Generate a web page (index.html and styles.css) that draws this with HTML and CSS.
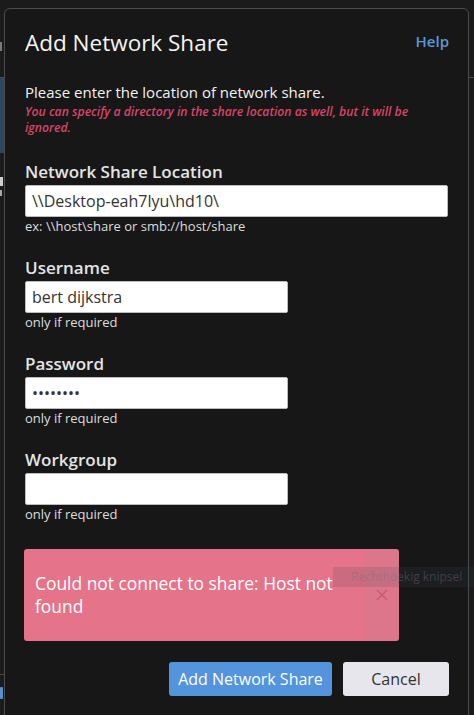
FILE: index.html
```html
<!DOCTYPE html>
<html lang="en">
<head>
<meta charset="utf-8">
<title>Add Network Share</title>
<link rel="stylesheet" href="styles.css">
</head>
<body>
<div class="screen">
  <div class="strip strip-left">
    <div class="s-top"><span class="frag"></span></div>
    <div class="s-line"></div>
    <div class="s-blue"></div>
    <div class="s-gap"></div>
    <div class="s-mark"></div>
    <div class="s-mark small"></div>
    <div class="s-fill"></div>
    <div class="s-line"></div>
    <div class="s-link"></div>
  </div>

  <div class="dialog">
    <header class="dlg-head">
      <h1 class="dlg-title">Add Network Share</h1>
      <a class="help">Help</a>
    </header>

    <div class="intro">
      <p class="intro-main">Please enter the location of network share.</p>
      <p class="intro-note">You can specify a directory in the share location as well, but it will be ignored.</p>
    </div>

    <div class="field first">
      <label class="field-label">Network Share Location</label>
      <input class="field-input wide" type="text" value="\\Desktop-eah7lyu\hd10\">
      <div class="field-hint">ex: \\host\share or smb://host/share</div>
    </div>

    <div class="field">
      <label class="field-label">Username</label>
      <input class="field-input" type="text" value="bert dijkstra">
      <div class="field-hint">only if required</div>
    </div>

    <div class="field">
      <label class="field-label">Password</label>
      <input class="field-input" type="password" value="12345678">
      <div class="field-hint">only if required</div>
    </div>

    <div class="field">
      <label class="field-label">Workgroup</label>
      <input class="field-input" type="text" value="">
      <div class="field-hint">only if required</div>
    </div>

    <div class="alert">
      <div class="alert-text">Could not connect to share: Host not found</div>
      <div class="alert-close">
        <svg width="12" height="12" viewBox="0 0 12 12"><path d="M1 1 L11 11 M11 1 L1 11" stroke="#c9566f" stroke-width="1.3" fill="none"/></svg>
      </div>
    </div>

    <div class="actions">
      <button class="btn btn-primary">Add Network Share</button>
      <button class="btn btn-default">Cancel</button>
    </div>
  </div>

  <div class="strip strip-right">
    <div class="s-top"></div>
    <div class="s-line"></div>
  </div>
</div>
<div class="tooltip">Rechthoekig knipsel</div>
</body>
</html>
```

FILE: styles.css
```css
* { box-sizing: border-box; }

html, body {
  margin: 0;
  padding: 0;
  height: 715px;
  overflow: hidden;
  background: #1b1b1b;
  font-family: "Open Sans", "Noto Sans", "Liberation Sans", sans-serif;
}

.screen {
  display: flex;
  align-items: flex-start;
  height: 715px;
}

.strip {
  display: flex;
  flex-direction: column;
  overflow: hidden;
  height: 715px;
  flex: none;
}
.strip-left { width: 4px; }
.strip-right { width: 5px; }

.s-top { height: 77px; }
.frag {
  display: block;
  margin-top: 42px;
  width: 2px;
  height: 9px;
  background: #7a7a7a;
}
.s-line { height: 1px; background: #4a4a4a; flex: none; }
.s-blue { height: 75px; background: #2d4663; flex: none; }
.s-gap { height: 24px; flex: none; }
.s-mark {
  flex: none;
  width: 3px;
  height: 9px;
  background: #cfcfcf;
  margin-bottom: 4px;
}
.s-mark.small { width: 2px; height: 6px; background: #a8a8a8; }
.s-fill { flex: 1; }
.s-link {
  flex: none;
  width: 3px;
  height: 12px;
  border-radius: 1px;
  background: #5a8fd0;
  margin-top: 12px;
  margin-bottom: 16px;
}

.dialog {
  margin-top: 8px;
  width: 465px;
  height: 740px;
  flex: none;
  background: #171717;
  border: 1px solid #4c4c4c;
  border-radius: 6px;
  padding: 19px 19px 0 20px;
}

.dlg-head {
  display: flex;
  justify-content: space-between;
  align-items: flex-start;
}
.dlg-title {
  margin: 0;
  font-size: 22.5px;
  line-height: 30px;
  font-weight: 400;
  color: #f4f4f4;
}
.help {
  margin-top: 3px;
  font-size: 15px;
  line-height: 20px;
  font-weight: 600;
  color: #5a9ad8;
}

.intro { margin-top: 24px; }
.intro-main {
  margin: 0;
  font-size: 15px;
  line-height: 20px;
  color: #f2f2f2;
}
.intro-note {
  margin: 2px 0 0;
  font-size: 12.2px;
  line-height: 16px;
  font-style: italic;
  font-weight: 600;
  color: #d8456a;
}

.field {
  display: flex;
  flex-direction: column;
  align-items: flex-start;
  margin-top: 22px;
}
.field.first { margin-top: 25px; }

.field-label {
  font-size: 17px;
  line-height: 22px;
  font-weight: 600;
  color: #e4e4e4;
  margin-bottom: 2px;
}
.field-input {
  width: 263px;
  height: 32px;
  border: 1px solid #bdbdbd;
  border-radius: 2px;
  background: #ffffff;
  padding: 0 6px;
  font-family: "Open Sans", "Noto Sans", sans-serif;
  font-size: 16px;
  color: #333333;
  outline: none;
}
.field-input.wide { width: 423px; }

.field-hint {
  font-size: 13px;
  line-height: 18px;
  color: #dedede;
}

.alert {
  margin-top: 26px;
  width: 375px;
  margin-left: -1px;
  display: flex;
  background: #e5738a;
  border-radius: 3px;
  overflow: hidden;
}
.alert-text {
  flex: 1;
  padding: 23px 10px 23px 11px;
  font-size: 17.4px;
  line-height: 23px;
  color: #ffffff;
}
.alert-close {
  width: 34px;
  flex: none;
  display: flex;
  align-items: center;
  justify-content: center;
  background: rgba(150, 150, 150, 0.09);
}

.actions {
  margin-top: 21px;
  display: flex;
  justify-content: flex-end;
  gap: 11px;
}
.btn {
  height: 34px;
  border: none;
  border-radius: 3px;
  font-family: "Open Sans", "Noto Sans", sans-serif;
  font-size: 16px;
  padding: 0;
}
.btn-primary {
  width: 163px;
  background: #5394dd;
  color: #ffffff;
}
.btn-default {
  width: 106px;
  background: #e6e6ec;
  color: #333333;
}

.tooltip {
  position: absolute;
  left: 333px;
  top: 567px;
  right: 0;
  height: 20px;
  padding-left: 18px;
  background: rgba(60, 70, 80, 0.16);
  color: rgba(120, 110, 125, 0.42);
  font-size: 12px;
  line-height: 20px;
  white-space: nowrap;
}
```
